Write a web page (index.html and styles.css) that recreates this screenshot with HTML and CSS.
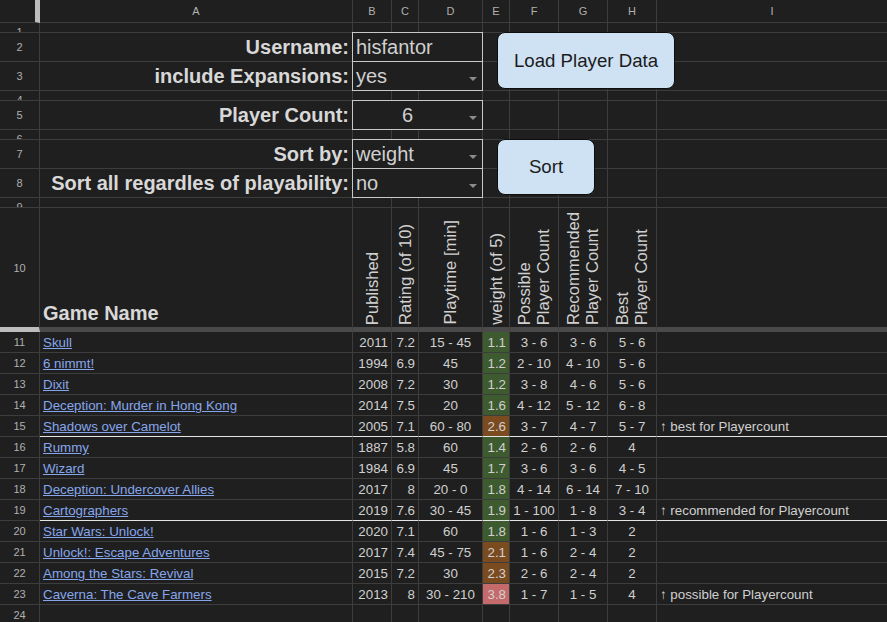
FILE: index.html
```html
<!DOCTYPE html>
<html>
<head>
<meta charset="utf-8">
<link rel="stylesheet" href="styles.css">
</head>
<body>
<div class="sheet">
  <div class="c corner"></div>
  <div class="c colh">A</div><div class="c colh">B</div><div class="c colh">C</div><div class="c colh">D</div><div class="c colh">E</div><div class="c colh">F</div><div class="c colh">G</div><div class="c colh">H</div><div class="c colh">I</div>

  <div class="c rh thin">1</div>
  <div class="c"></div><div class="c"></div><div class="c"></div><div class="c"></div><div class="c"></div><div class="c"></div><div class="c"></div><div class="c"></div><div class="c"></div>

  <div class="c rh">2</div>
  <div class="c lbl">Username:</div>
  <div class="c inp"><span class="val">hisfantor</span></div>
  <div class="c"></div><div class="c"></div><div class="c"></div><div class="c"></div><div class="c"></div>

  <div class="c rh">3</div>
  <div class="c lbl">include Expansions:</div>
  <div class="c inp"><span class="val">yes</span><span class="arrow"></span></div>
  <div class="c"></div><div class="c"></div><div class="c"></div><div class="c"></div><div class="c"></div>

  <div class="c rh thin">4</div>
  <div class="c"></div><div class="c"></div><div class="c"></div><div class="c"></div><div class="c"></div><div class="c"></div><div class="c"></div><div class="c"></div><div class="c"></div>

  <div class="c rh">5</div>
  <div class="c lbl">Player Count:</div>
  <div class="c inp"><span class="val center">6</span><span class="arrow"></span></div>
  <div class="c"></div><div class="c"></div><div class="c"></div><div class="c"></div><div class="c"></div>

  <div class="c rh thin">6</div>
  <div class="c"></div><div class="c"></div><div class="c"></div><div class="c"></div><div class="c"></div><div class="c"></div><div class="c"></div><div class="c"></div><div class="c"></div>

  <div class="c rh">7</div>
  <div class="c lbl">Sort by:</div>
  <div class="c inp"><span class="val">weight</span><span class="arrow"></span></div>
  <div class="c"></div><div class="c"></div><div class="c"></div><div class="c"></div><div class="c"></div>

  <div class="c rh">8</div>
  <div class="c lbl">Sort all regardles of playability:</div>
  <div class="c inp"><span class="val">no</span><span class="arrow"></span></div>
  <div class="c"></div><div class="c"></div><div class="c"></div><div class="c"></div><div class="c"></div>

  <div class="c rh thin">9</div>
  <div class="c"></div><div class="c"></div><div class="c"></div><div class="c"></div><div class="c"></div><div class="c"></div><div class="c"></div><div class="c"></div><div class="c"></div>

  <div class="c rh frz-h">10</div>
  <div class="c frz gn">Game Name</div>
  <div class="c frz vh"><span>Published</span></div>
  <div class="c frz vh"><span>Rating (of 10)</span></div>
  <div class="c frz vh"><span>Playtime [min]</span></div>
  <div class="c frz vh"><span>weight (of 5)</span></div>
  <div class="c frz vh"><span>Possible<br>Player Count</span></div>
  <div class="c frz vh"><span>Recommended<br>Player Count</span></div>
  <div class="c frz vh"><span>Best<br>Player Count</span></div>
  <div class="c frz"></div>

  <div class="c rh">11</div>
  <div class="c"><a class="link" href="#">Skull</a></div>
  <div class="c num">2011</div><div class="c num">7.2</div><div class="c ctr">15 - 45</div><div class="c num wg">1.1</div>
  <div class="c ctr">3 - 6</div><div class="c ctr">3 - 6</div><div class="c ctr">5 - 6</div><div class="c"></div>

  <div class="c rh">12</div>
  <div class="c"><a class="link" href="#">6 nimmt!</a></div>
  <div class="c num">1994</div><div class="c num">6.9</div><div class="c ctr">45</div><div class="c num wg">1.2</div>
  <div class="c ctr">2 - 10</div><div class="c ctr">4 - 10</div><div class="c ctr">5 - 6</div><div class="c"></div>

  <div class="c rh">13</div>
  <div class="c"><a class="link" href="#">Dixit</a></div>
  <div class="c num">2008</div><div class="c num">7.2</div><div class="c ctr">30</div><div class="c num wg">1.2</div>
  <div class="c ctr">3 - 8</div><div class="c ctr">4 - 6</div><div class="c ctr">5 - 6</div><div class="c"></div>

  <div class="c rh">14</div>
  <div class="c"><a class="link" href="#">Deception: Murder in Hong Kong</a></div>
  <div class="c num">2014</div><div class="c num">7.5</div><div class="c ctr">20</div><div class="c num wg">1.6</div>
  <div class="c ctr">4 - 12</div><div class="c ctr">5 - 12</div><div class="c ctr">6 - 8</div><div class="c"></div>

  <div class="c rh">15</div>
  <div class="c sep"><a class="link" href="#">Shadows over Camelot</a></div>
  <div class="c sep num">2005</div><div class="c sep num">7.1</div><div class="c sep ctr">60 - 80</div><div class="c sep num wo">2.6</div>
  <div class="c sep ctr">3 - 7</div><div class="c sep ctr">4 - 7</div><div class="c sep ctr">5 - 7</div><div class="c sep">↑ best for Playercount</div>

  <div class="c rh">16</div>
  <div class="c"><a class="link" href="#">Rummy</a></div>
  <div class="c num">1887</div><div class="c num">5.8</div><div class="c ctr">60</div><div class="c num wg">1.4</div>
  <div class="c ctr">2 - 6</div><div class="c ctr">2 - 6</div><div class="c ctr">4</div><div class="c"></div>

  <div class="c rh">17</div>
  <div class="c"><a class="link" href="#">Wizard</a></div>
  <div class="c num">1984</div><div class="c num">6.9</div><div class="c ctr">45</div><div class="c num wg">1.7</div>
  <div class="c ctr">3 - 6</div><div class="c ctr">3 - 6</div><div class="c ctr">4 - 5</div><div class="c"></div>

  <div class="c rh">18</div>
  <div class="c"><a class="link" href="#">Deception: Undercover Allies</a></div>
  <div class="c num">2017</div><div class="c num">8</div><div class="c ctr">20 - 0</div><div class="c num wg">1.8</div>
  <div class="c ctr">4 - 14</div><div class="c ctr">6 - 14</div><div class="c ctr">7 - 10</div><div class="c"></div>

  <div class="c rh">19</div>
  <div class="c sep"><a class="link" href="#">Cartographers</a></div>
  <div class="c sep num">2019</div><div class="c sep num">7.6</div><div class="c sep ctr">30 - 45</div><div class="c sep num wg">1.9</div>
  <div class="c sep ctr">1 - 100</div><div class="c sep ctr">1 - 8</div><div class="c sep ctr">3 - 4</div><div class="c sep">↑ recommended for Playercount</div>

  <div class="c rh">20</div>
  <div class="c"><a class="link" href="#">Star Wars: Unlock!</a></div>
  <div class="c num">2020</div><div class="c num">7.1</div><div class="c ctr">60</div><div class="c num wg">1.8</div>
  <div class="c ctr">1 - 6</div><div class="c ctr">1 - 3</div><div class="c ctr">2</div><div class="c"></div>

  <div class="c rh">21</div>
  <div class="c"><a class="link" href="#">Unlock!: Escape Adventures</a></div>
  <div class="c num">2017</div><div class="c num">7.4</div><div class="c ctr">45 - 75</div><div class="c num wo">2.1</div>
  <div class="c ctr">1 - 6</div><div class="c ctr">2 - 4</div><div class="c ctr">2</div><div class="c"></div>

  <div class="c rh">22</div>
  <div class="c"><a class="link" href="#">Among the Stars: Revival</a></div>
  <div class="c num">2015</div><div class="c num">7.2</div><div class="c ctr">30</div><div class="c num wo">2.3</div>
  <div class="c ctr">2 - 6</div><div class="c ctr">2 - 4</div><div class="c ctr">2</div><div class="c"></div>

  <div class="c rh">23</div>
  <div class="c"><a class="link" href="#">Caverna: The Cave Farmers</a></div>
  <div class="c num">2013</div><div class="c num">8</div><div class="c ctr">30 - 210</div><div class="c num wr">3.8</div>
  <div class="c ctr">1 - 7</div><div class="c ctr">1 - 5</div><div class="c ctr">4</div><div class="c">↑ possible for Playercount</div>

  <div class="c rh">24</div>
  <div class="c"></div><div class="c"></div><div class="c"></div><div class="c"></div><div class="c"></div><div class="c"></div><div class="c"></div><div class="c"></div><div class="c"></div>

  <div class="btn btn-load">Load Player Data</div>
  <div class="btn btn-sort">Sort</div>
</div>
</body>
</html>
```

FILE: styles.css
```css
:root {
  --bg: #1f1f1f;
  --grid: #3d3d3d;
  --text: #d0d0d0;
  --hdr: #b0b0b0;
}

html, body {
  margin: 0;
  padding: 0;
  background: var(--bg);
  overflow: hidden;
}

body {
  font-family: "Liberation Sans", Arial, sans-serif;
  width: 887px;
  height: 622px;
}

.sheet {
  position: relative;
  display: grid;
  grid-template-columns: 40px 313px 39px 27px 64px 27px 49px 49px 49px 231px;
  grid-template-rows: 23px 10px 29px 29px 10px 29px 10px 29px 29px 10px 124px repeat(14, 21px);
  width: 888px;
}

.c {
  box-sizing: border-box;
  border-right: 1px solid var(--grid);
  border-bottom: 1px solid var(--grid);
  overflow: hidden;
  min-width: 0;
  display: flex;
  align-items: flex-end;
  white-space: nowrap;
  color: var(--text);
  font-size: 13.33px;
  padding: 0 3px 2px;
}

.corner {
  border-right: 5px solid #bdbdbd;
}

.colh {
  align-items: center;
  justify-content: center;
  font-size: 11px;
  color: var(--hdr);
  padding: 0;
}

.rh {
  align-items: center;
  justify-content: center;
  font-size: 11px;
  color: var(--hdr);
  padding: 0;
}

.rh.thin {
  align-items: flex-start;
  padding-top: 3px;
}

.lbl {
  justify-content: flex-end;
  font-weight: bold;
  font-size: 20px;
  color: #d8d8d8;
  padding: 0 3px 2px;
}

.inp {
  grid-column: span 3;
  position: relative;
  overflow: visible;
  font-size: 20px;
  color: #d0d0d0;
  padding: 0 0 2px 3px;
}

.inp::before {
  content: "";
  position: absolute;
  top: -1px;
  left: -1px;
  right: -1px;
  bottom: -1px;
  border: 1px solid #c8c8c8;
  pointer-events: none;
}

.val {
  flex: 1;
}

.val.center {
  text-align: center;
}

.arrow {
  flex-shrink: 0;
  width: 0;
  height: 0;
  border-left: 4px solid transparent;
  border-right: 4px solid transparent;
  border-top: 4px solid #8c8c8c;
  margin: 0 5px 7px 10px;
  align-self: flex-end;
}

.frz {
  border-bottom: 5px solid #4a4a4a;
}

.frz-h {
  border-bottom: 5px solid #bdbdbd;
}

.gn {
  font-weight: bold;
  font-size: 20px;
  color: #d8d8d8;
  padding: 0 3px 2px;
}

.vh {
  justify-content: center;
  align-items: flex-end;
  padding: 0 0 2px;
}

.vh span {
  writing-mode: vertical-rl;
  transform: rotate(180deg);
  font-size: 16.67px;
  line-height: 19px;
  white-space: nowrap;
}

.num {
  justify-content: flex-end;
}

.ctr {
  justify-content: center;
}

.link {
  color: #86a6ec;
  text-decoration: underline;
}

.wg {
  background: #3d5b2e;
}

.wo {
  background: #7b4b20;
}

.wr {
  background: #c46a6a;
}

.sep {
  border-bottom-color: #e4e4e4;
}

.btn {
  position: absolute;
  box-sizing: border-box;
  display: flex;
  align-items: center;
  justify-content: center;
  background: #cfe2f3;
  border: 1px solid #0e0e0e;
  border-radius: 8px;
  color: #1b1b1b;
  font-size: 18.67px;
  font-family: "Liberation Sans", Arial, sans-serif;
}

.btn-load {
  left: 497px;
  top: 32px;
  width: 178px;
  height: 57px;
}

.btn-sort {
  left: 497px;
  top: 139px;
  width: 98px;
  height: 56px;
}
```
